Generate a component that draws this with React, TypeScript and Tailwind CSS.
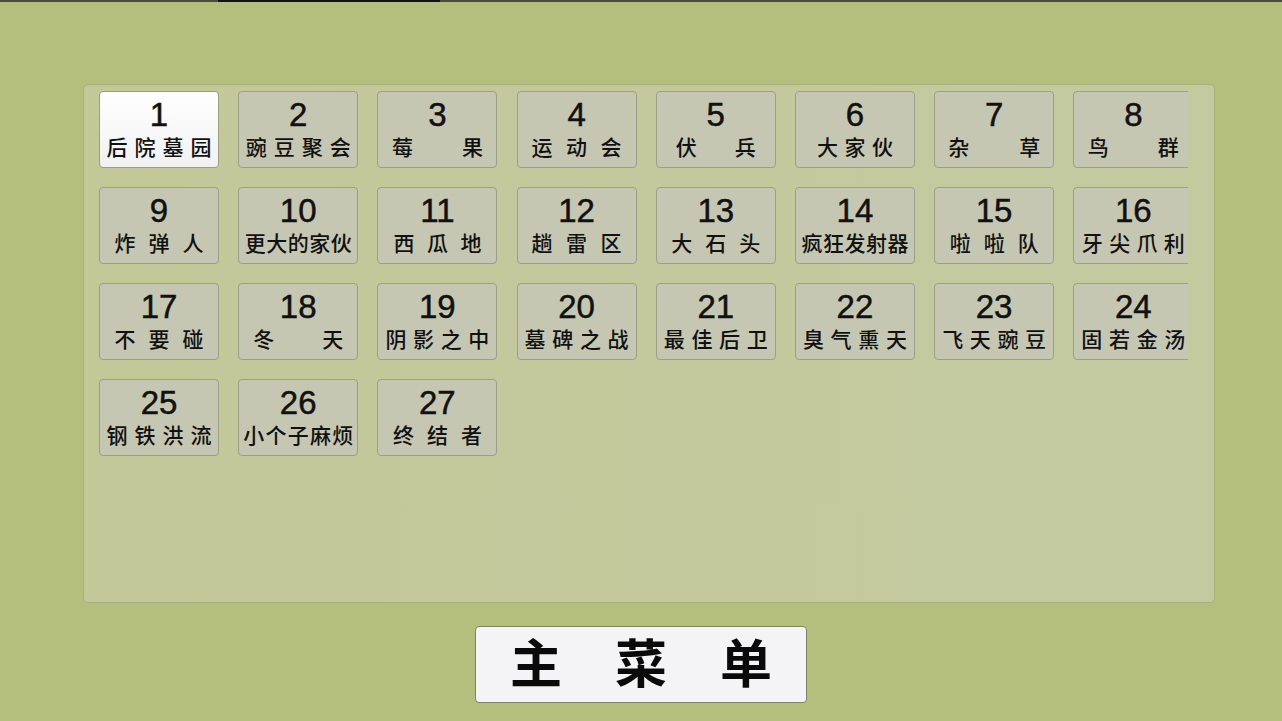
const LEVELS: { n: number; name: string; w: number }[] = [
  { n: 1, name: '后院墓园', w: 105 },
  { n: 2, name: '豌豆聚会', w: 105 },
  { n: 3, name: '莓果', w: 91 },
  { n: 4, name: '运动会', w: 90 },
  { n: 5, name: '伏兵', w: 80 },
  { n: 6, name: '大家伙', w: 76 },
  { n: 7, name: '杂草', w: 92 },
  { n: 8, name: '鸟群', w: 91 },
  { n: 9, name: '炸弹人', w: 89 },
  { n: 10, name: '更大的家伙', w: 107 },
  { n: 11, name: '西瓜地', w: 88 },
  { n: 12, name: '趟雷区', w: 90 },
  { n: 13, name: '大石头', w: 89 },
  { n: 14, name: '疯狂发射器', w: 107 },
  { n: 15, name: '啦啦队', w: 89 },
  { n: 16, name: '牙尖爪利', w: 103 },
  { n: 17, name: '不要碰', w: 89 },
  { n: 18, name: '冬天', w: 90 },
  { n: 19, name: '阴影之中', w: 104 },
  { n: 20, name: '墓碑之战', w: 104 },
  { n: 21, name: '最佳后卫', w: 104 },
  { n: 22, name: '臭气熏天', w: 104 },
  { n: 23, name: '飞天豌豆', w: 104 },
  { n: 24, name: '固若金汤', w: 104 },
  { n: 25, name: '钢铁洪流', w: 105 },
  { n: 26, name: '小个子麻烦', w: 110 },
  { n: 27, name: '终结者', w: 89 },
]

const FONT = "[font-family:'Liberation_Sans','Noto_Sans_CJK_SC',sans-serif]"

function LevelButton({ n, name, w, active }: { n: number; name: string; w: number; active?: boolean }) {
  return (
    <div
      className={
        'flex h-[77px] w-[120px] shrink-0 flex-col items-center rounded-[4px] border pt-[6px] ' +
        (active
          ? 'border-[#9aa084] bg-gradient-to-b from-[#ffffff] to-[#f1f1f1]'
          : 'border-[#9a9f86] bg-[#c5c7b2]')
      }
    >
      <div className="h-[34px] text-[33px] leading-[34px] text-[#111] [-webkit-text-stroke:0.5px_#111]">{n}</div>
      <div
        className="mt-[4px] flex justify-between text-[21px] font-medium leading-[24px] text-[#111]"
        style={{ width: w }}
      >
        {name.split('').map((c, i) => (
          <span key={i}>{c}</span>
        ))}
      </div>
    </div>
  )
}

export default function App() {
  return (
    <div className={'relative h-[721px] w-[1282px] overflow-hidden bg-[#b4bf7e] ' + FONT}>
      {/* top window edge */}
      <div className="flex h-[2px]">
        <div className="w-[218px] bg-[#4a4d40]" />
        <div className="w-[222px] bg-[#111]" />
        <div className="flex-1 bg-[#4a4d40]" />
      </div>

      <div className="pl-[83px] pt-[82px]">
        <div className="h-[519px] w-[1132px] rounded-[5px] border border-[#a8b07c] bg-gradient-to-r from-[#c2c898] to-[#c4caa0] pl-[15px] pt-[6px]">
          <div className="w-[1089px] overflow-hidden">
            <div className="grid w-[1110px] grid-cols-[repeat(8,120px)] gap-x-[19.2px] gap-y-[19px]">
              {LEVELS.map((l) => (
                <LevelButton key={l.n} n={l.n} name={l.name} w={l.w} active={l.n === 1} />
              ))}
            </div>
          </div>
        </div>
      </div>

      <div className="flex justify-center">
        <div className="mt-[23px] flex h-[77px] w-[332px] items-center justify-center gap-[53px] rounded-[4px] border border-[#7d8566] bg-[#f4f4f6] text-[52px] font-bold text-[#0a0a0a]">
          <span>主</span>
          <span>菜</span>
          <span>单</span>
        </div>
      </div>
    </div>
  )
}
